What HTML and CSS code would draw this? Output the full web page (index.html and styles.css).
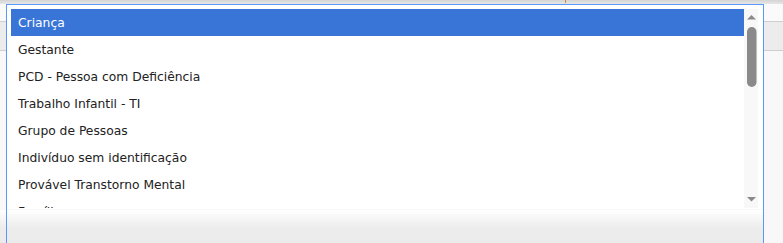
FILE: index.html
```html
<!DOCTYPE html>
<html lang="pt-BR">
<head>
<meta charset="utf-8">
<title>Lista</title>
<link rel="stylesheet" href="styles.css">
</head>
<body>
<div class="page">
  <div class="labels">
    <span class="label l-cpf">CPF</span>
    <span class="label l-cep">CEP</span>
    <span class="label l-end">E<i class="caret"></i></span>
  </div>
  <div class="row row-a"></div>
  <div class="row row-b"></div>
  <div class="row row-c"></div>
  <div class="footer"></div>

  <div class="drop">
    <div class="results">
      <ul class="list">
        <li class="item highlighted">Criança</li>
        <li class="item">Gestante</li>
        <li class="item">PCD - Pessoa com Deficiência</li>
        <li class="item">Trabalho Infantil - TI</li>
        <li class="item">Grupo de Pessoas</li>
        <li class="item">Indivíduo sem identificação</li>
        <li class="item">Provável Transtorno Mental</li>
        <li class="item">Família</li>
        <li class="item">Outros</li>
      </ul>
      <div class="scroll">
        <svg width="14" height="199" viewBox="0 0 14 199" aria-hidden="true">
          <polygon points="3,10.5 12,10.5 7.5,6" fill="#8a8a8a"/>
          <rect x="3" y="18" width="9.5" height="60" rx="4.75" fill="#8a8a8a"/>
          <polygon points="3,188 12,188 7.5,192.5" fill="#8a8a8a"/>
        </svg>
      </div>
    </div>
  </div>
</div>
</body>
</html>
```
FILE: styles.css
```css
* { box-sizing: border-box; }
html, body {
  margin: 0;
  padding: 0;
}
body {
  width: 783px;
  height: 243px;
  overflow: hidden;
  background: #f8f8f8;
  font-family: "DejaVu Sans", Verdana, sans-serif;
}
.page {
  position: relative;
  width: 783px;
  height: 243px;
  display: flex;
  flex-direction: column;
}
.labels {
  height: 4px;
  overflow: hidden;
  background: linear-gradient(#d4d4d4, #e6e6e6);
  display: grid;
  grid-template-columns: 267px 265px 1fr;
  padding-left: 6px;
}
.label {
  display: block;
  font-size: 12px;
  font-weight: bold;
  line-height: 14px;
  margin-top: -11px;
  color: #2a2a2a;
  position: relative;
}
.caret {
  display: inline-block;
  width: 1px;
  height: 14px;
  background: #c98a3a;
  margin-left: 19px;
  vertical-align: top;
}
.row-a {
  height: 18px;
  background: #fafafa;
  border-bottom: 1px solid #cfcfcf;
}
.row-b {
  height: 29px;
  background: #ececec;
  border-bottom: 1px solid #cfcfcf;
}
.row-c {
  flex: 1;
  background: #f8f8f8;
}
.footer {
  width: 763px;
  height: 33px;
  background: linear-gradient(#ffffff 0%, #ececec 55%, #ebebeb 100%);
}
.drop {
  position: absolute;
  left: 6px;
  top: 4px;
  width: 758px;
  height: 239px;
  border: 1px solid #5897fb;
  border-bottom: none;
}
.results {
  display: flex;
  height: 204px;
  background: #fff;
  padding: 4px 5px 0 4px;
}
.list {
  list-style: none;
  margin: 0;
  padding: 0;
  width: 733px;
  height: 199px;
  overflow: hidden;
}
.item {
  height: 27px;
  line-height: 27px;
  padding: 1px 0 0 7px;
  font-size: 12.3px;
  color: #222;
  white-space: nowrap;
}
.item.highlighted {
  background: #3875d7;
  color: #fff;
}
.scroll {
  width: 14px;
  height: 199px;
  background: #f8f8f8;
}
.scroll svg { display: block; }
```
